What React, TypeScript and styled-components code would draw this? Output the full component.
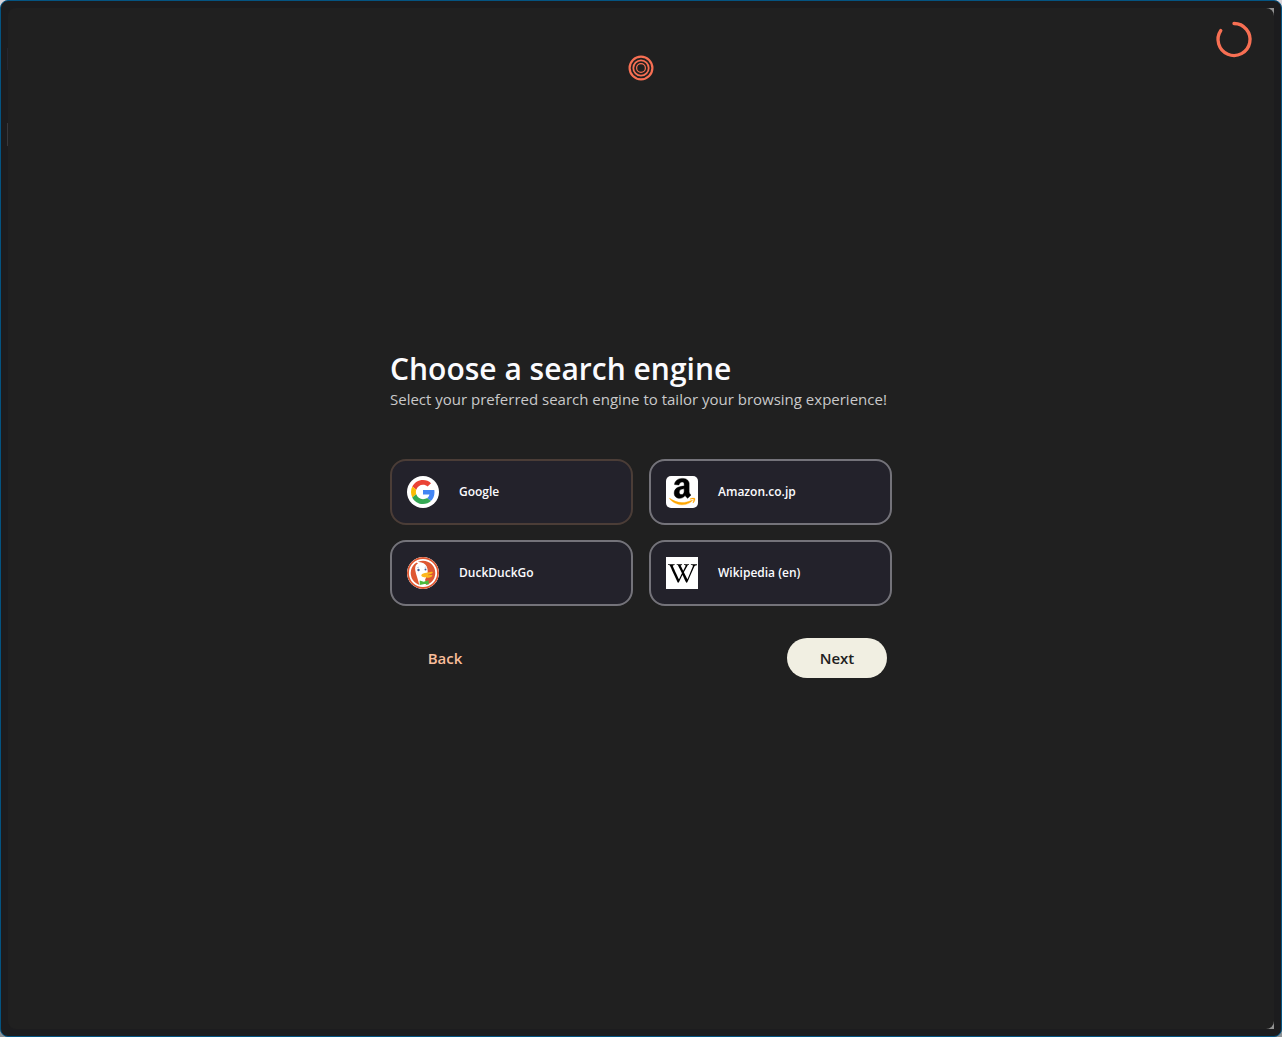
import React, { useState } from "react";
import styled, { createGlobalStyle } from "styled-components";
import { SiWikipedia } from "react-icons/si";

const GlobalStyle = createGlobalStyle`
  *, *::before, *::after { box-sizing: border-box; }
  body {
    margin: 0;
    background: linear-gradient(#d8d4da, #8c9296);
    font-family: "Open Sans", "Noto Sans", sans-serif;
    color: #fbfbfe;
  }
`;

const WindowFrame = styled.div`
  min-height: 100vh;
  display: flex;
  padding: 7px;
  border: 1px solid #045482;
  border-radius: 8px;
  background:
    linear-gradient(#25252e, #25252e) 6px 47px / 1px 22px no-repeat,
    linear-gradient(#37373a, #37373a) 6px 122px / 1px 23px no-repeat,
    #1c1c1e;
`;

const Backdrop = styled.div`
  flex: 1;
  display: flex;
  background: linear-gradient(to left, #929292 8px, #1c1c1e 8px);
`;

const Page = styled.div`
  position: relative;
  flex: 1;
  display: grid;
  grid-template-rows: 120px 1fr 130px;
  border-radius: 8px;
  background: #202020;
`;

const Header = styled.header`
  display: flex;
  align-items: center;
  justify-content: center;
`;

const Progress = styled.svg`
  position: absolute;
  top: 12px;
  right: 20px;
`;

const Main = styled.main`
  display: flex;
  align-items: center;
  justify-content: center;
`;

const Form = styled.form`
  width: 100%;
  max-width: 502px;
`;

const Title = styled.h1`
  margin: 0;
  font-size: 30px;
  line-height: 40px;
  font-weight: 600;
`;

const Subtitle = styled.p`
  margin: 0 0 50px;
  font-size: 15px;
  line-height: 20px;
  color: #c9c9ca;
`;

const Engines = styled.div`
  display: grid;
  grid-template-columns: 1fr 1fr;
  gap: 15px 16px;
`;

const HiddenRadio = styled.input`
  position: absolute;
  opacity: 0;
  pointer-events: none;
`;

const EngineCard = styled.label<{ $selected: boolean }>`
  display: flex;
  align-items: center;
  gap: 20px;
  height: 66px;
  padding: 0 15px;
  border: 2px solid ${(p) => (p.$selected ? "#4b3d37" : "#74737a")};
  border-radius: 16px;
  background: #23222b;
  font-size: 12px;
  line-height: 16px;
  font-weight: 600;
  cursor: pointer;
`;

const Tile = styled.span<{ $radius: string }>`
  display: flex;
  align-items: center;
  justify-content: center;
  width: 32px;
  height: 32px;
  border-radius: ${(p) => p.$radius};
  background: #fff;
  color: #000;
  overflow: hidden;
`;

const Actions = styled.div`
  display: flex;
  justify-content: space-between;
  margin-top: 32px;
  padding: 0 5px;
`;

const ActionButton = styled.button<{ $primary?: boolean }>`
  width: 100px;
  height: 40px;
  padding: 0;
  border: 0;
  border-radius: 20px;
  background: ${(p) => (p.$primary ? "#f1efe2" : "transparent")};
  color: ${(p) => (p.$primary ? "#202020" : "#f9bd9a")};
  font-family: inherit;
  font-size: 15px;
  font-weight: 600;
  cursor: pointer;
`;

const Logo = () => (
  <svg width="26" height="26" viewBox="0 0 26 26" fill="none" stroke="#f76f53" aria-hidden="true">
    <circle cx="13" cy="13" r="11.4" strokeWidth="2.2" />
    <circle cx="13" cy="13" r="7.7" strokeWidth="1.8" />
    <circle cx="13" cy="13" r="4.4" strokeWidth="1.2" />
  </svg>
);

const GoogleIcon = () => (
  <Tile $radius="50%">
    <svg width="24" height="24" viewBox="0 0 48 48" aria-hidden="true">
      <path fill="#EA4335" d="M24 9.5c3.54 0 6.71 1.22 9.21 3.6l6.85-6.85C35.9 2.38 30.47 0 24 0 14.62 0 6.51 5.38 2.56 13.22l7.98 6.19C12.43 13.72 17.74 9.5 24 9.5z" />
      <path fill="#4285F4" d="M46.98 24.55c0-1.57-.15-3.09-.38-4.55H24v9.02h12.94c-.58 2.96-2.26 5.48-4.78 7.18l7.73 6c4.51-4.18 7.09-10.36 7.09-17.65z" />
      <path fill="#FBBC05" d="M10.53 28.59c-.48-1.45-.76-2.99-.76-4.59s.27-3.14.76-4.59l-7.98-6.19C.92 16.46 0 20.12 0 24c0 3.88.92 7.54 2.56 10.78l7.97-6.19z" />
      <path fill="#34A853" d="M24 48c6.48 0 11.93-2.13 15.89-5.81l-7.73-6c-2.15 1.45-4.92 2.3-8.16 2.3-6.26 0-11.57-4.22-13.47-9.91l-7.98 6.19C6.51 42.62 14.62 48 24 48z" />
    </svg>
  </Tile>
);

const AmazonIcon = () => (
  <Tile $radius="5px">
    <svg width="32" height="32" viewBox="0 0 32 32" aria-hidden="true">
      <g transform="translate(3 .5) scale(.059)">
        <path d="M257.2 162.7c-48.7 1.8-169.5 15.5-169.5 117.5 0 109.5 138.3 114 183.5 43.2 6.5 10.2 35.4 37.5 45.3 46.8l56.8-56S341 288.9 341 261.4V114.3C341 89 316.5 32 228.7 32 140.7 32 94 87 94 136.3l73.5 6.8c16.3-49.5 54.2-49.5 54.2-49.5 40.7-.1 35.5 29.8 35.5 69.1zm0 86.8c0 80-84.2 68-84.2 17.2 0-47.2 50.5-56.7 84.2-57.8v40.6z" stroke="#000" strokeWidth="8" />
        <path fill="#ffa700" stroke="#ffa700" strokeWidth="6" d="M393.2 413c-7.7 10-70 67-174.5 67S34.2 408.5 9.7 379c-6.8-7.7 1-11.300 5.500-8.300C88.500 415.200 203 488.500 387.700 401c7.500-3.700 13.300 2 5.500 12zm39.800 2.200c-6.500 15.800-16 26.800-21.200 31-5.500 4.500-9.500 2.700-6.500-3.800s19.300-46.500 12.700-55c-6.500-8.300-37-4.300-48-3.200-10.800 1-13 2-14-.3-2.300-5.700 21.700-15.500 37.500-17.500 15.700-1.800 41-.8 46 5.700 3.700 5.100 0 27.100-6.500 43.100z" />
      </g>
    </svg>
  </Tile>
);

const DuckIcon = () => (
  <Tile $radius="50%">
    <svg width="32" height="32" viewBox="0 0 32 32" aria-hidden="true">
      <circle cx="16" cy="16" r="16" fill="#de5833" />
      <circle cx="16" cy="16" r="13.2" fill="none" stroke="#fff" strokeWidth="1.8" />
      <path fill="#fff" d="M12.4 28.4C11.2 23 8.9 17.500 8.300 13.600 7.700 10 8.600 7.600 11 6.500L9.300 5.600c1.600-.7 3.500-.6 5.100 0 3.300.8 5.500 3 6.100 6.500.4 2.800.2 4.400-.6 6.400l-1.800 4.300 1.200 5.500c-2.400 1.300-4.200 1.300-6.900.1z" />
      <path stroke="#9fb2d4" strokeWidth=".7" fill="none" d="M9.900 10.900c.5-.6 1.300-.8 2.100-.6M17.700 10.400c.5-.3 1.200-.3 1.600.1" />
      <circle cx="11.500" cy="13" r="1.200" fill="#3d5d97" />
      <circle cx="18.500" cy="12.500" r="1" fill="#3d5d97" />
      <path fill="#fdb81e" d="M14.400 18.100c.5-1.700 3-2 5-2.300 2-.2 3.800-1.200 5.800-1 .9.100.7 1.200-.3 1.700-1.700.8-3.900 1.200-4.500 1.500 1.500.5 4-.4 4.900.2.700 1-1.900 2.400-5 2.500-2.600 0-6.500-.7-5.900-2.600z" />
      <path fill="#4cba3c" d="M12.700 23.600l4 1.200 4.800-1.500.3 4.300-4.200-.6-4.900 1z" />
    </svg>
  </Tile>
);

const WikipediaIcon = () => (
  <Tile $radius="0">
    <SiWikipedia size={29} aria-hidden="true" />
  </Tile>
);

const engines = [
  { id: "google", name: "Google", Icon: GoogleIcon },
  { id: "amazon", name: "Amazon.co.jp", Icon: AmazonIcon },
  { id: "duckduckgo", name: "DuckDuckGo", Icon: DuckIcon },
  { id: "wikipedia", name: "Wikipedia (en)", Icon: WikipediaIcon },
];

export default function App() {
  const [selected, setSelected] = useState("google");
  return (
    <>
      <GlobalStyle />
      <WindowFrame>
        <Backdrop>
          <Page>
            <Header>
              <Logo />
            </Header>
            <Progress width="40" height="40" viewBox="0 0 40 40" fill="none" role="img" aria-label="Setup progress">
              <path d="M20 3.500A16 16 0 1 1 6.800 10.500" stroke="#f76f53" strokeWidth="3.300" strokeLinecap="round" />
            </Progress>
            <Main>
              <Form onSubmit={(e: React.FormEvent) => e.preventDefault()}>
                <Title>Choose a search engine</Title>
                <Subtitle>Select your preferred search engine to tailor your browsing experience!</Subtitle>
                <Engines role="radiogroup" aria-label="Search engine">
                  {engines.map(({ id, name, Icon }) => (
                    <EngineCard key={id} htmlFor={id} $selected={selected === id}>
                      <HiddenRadio
                        type="radio"
                        name="engine"
                        id={id}
                        checked={selected === id}
                        onChange={() => setSelected(id)}
                      />
                      <Icon />
                      <span>{name}</span>
                    </EngineCard>
                  ))}
                </Engines>
                <Actions>
                  <ActionButton type="button">Back</ActionButton>
                  <ActionButton type="submit" $primary>
                    Next
                  </ActionButton>
                </Actions>
              </Form>
            </Main>
          </Page>
        </Backdrop>
      </WindowFrame>
    </>
  );
}
